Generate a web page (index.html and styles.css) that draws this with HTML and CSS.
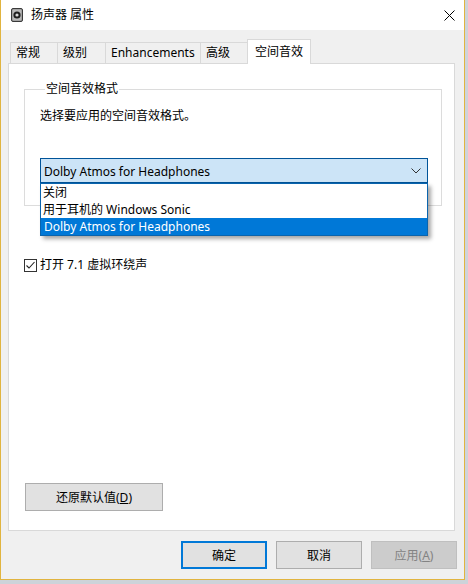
FILE: index.html
```html
<!DOCTYPE html>
<html lang="zh-CN">

<head>
    <meta charset="UTF-8">
    <title>扬声器 属性</title>
    <link rel="stylesheet" href="styles.css">
</head>

<body>

    <div class="window">

        <!-- Title bar -->
        <div class="titlebar">
            <svg class="app-icon" width="12" height="14" viewBox="0 0 12 14">
                <rect x="0.5" y="0.5" width="11" height="13" rx="1.5" fill="#8c8c8c" stroke="#3a3a3a"/>
                <rect x="1.5" y="1.5" width="9" height="11" rx="1" fill="#b9b9b9"/>
                <circle cx="6" cy="7" r="3.6" fill="#1e1e1e"/>
                <circle cx="6" cy="7" r="1.6" fill="#d8d8d8"/>
            </svg>
            <span class="title">扬声器 属性</span>
            <svg class="close" width="11" height="11" viewBox="0 0 11 11">
                <path d="M0.5 0.5 L10.5 10.5 M10.5 0.5 L0.5 10.5" stroke="#000" stroke-width="1"/>
            </svg>
        </div>

        <div class="client">

            <!-- Tabs -->
            <div class="tabs">
                <div class="tab tab-general">常规</div>
                <div class="tab tab-levels">级别</div>
                <div class="tab tab-enh">Enhancements</div>
                <div class="tab tab-adv">高级</div>
                <div class="tab tab-spatial active">空间音效</div>
            </div>

            <!-- Tab page -->
            <div class="panel">
                <fieldset class="group">
                    <legend>空间音效格式</legend>
                    <p class="desc">选择要应用的空间音效格式。</p>
                    <div class="combo-wrap">
                        <div class="combo">
                            <span>Dolby Atmos for Headphones</span>
                            <svg class="chevron" width="10" height="6" viewBox="0 0 10 6">
                                <path d="M0.5 0.5 L5 5 L9.5 0.5" fill="none" stroke="#333" stroke-width="1"/>
                            </svg>
                        </div>
                        <ul class="dropdown">
                            <li>关闭</li>
                            <li>用于耳机的 Windows Sonic</li>
                            <li class="selected">Dolby Atmos for Headphones</li>
                        </ul>
                    </div>
                </fieldset>

                <label class="check">
                    <span class="box">
                        <svg width="11" height="11" viewBox="0 0 11 11">
                            <path d="M1.5 5.5 L4 8 L9.5 2" fill="none" stroke="#222" stroke-width="1.1"/>
                        </svg>
                    </span>
                    打开 7.1 虚拟环绕声
                </label>

                <button class="btn reset">还原默认值(<u>D</u>)</button>
            </div>

            <!-- Dialog buttons -->
            <div class="actions">
                <button class="btn default">确定</button>
                <button class="btn">取消</button>
                <button class="btn disabled">应用(<u>A</u>)</button>
            </div>
        </div>
    </div>

</body>

</html>
```

FILE: styles.css
```css
/* Page */
body {
    margin: 0;
    background: #cdd3d9;
    font-family: "Noto Sans", "Noto Sans CJK SC", sans-serif;
    font-size: 12px;
    color: #000;
}

/* Window frame */
.window {
    width: 463px;
    height: 579px;
    border-left: 1px solid #e1b43f;
    border-right: 1px solid #e1b43f;
    border-bottom: 1px solid #e1b43f;
    background: #f0f0f0;
}

.titlebar {
    height: 30px;
    background: #fff;
    display: flex;
    align-items: center;
    padding-left: 10px;
    padding-right: 9px;
}

.app-icon {
    margin-right: 8px;
}

.title {
    flex-grow: 1;
    line-height: 16px;
}

/* Client area */
.client {
    display: flex;
    flex-direction: column;
}

/* Tabs */
.tabs {
    display: flex;
    align-items: flex-end;
    height: 24px;
    margin-top: 9px;
    padding-left: 9px;
}

.tab {
    box-sizing: border-box;
    height: 21px;
    border: 1px solid #d9d9d9;
    border-bottom: none;
    padding-left: 5px;
    line-height: 20px;
    background: #f0f0f0;
    margin-left: -1px;
    white-space: nowrap;
}

.tab-general {
    width: 48px;
    margin-left: 0;
}

.tab-levels {
    width: 49px;
}

.tab-enh {
    width: 96px;
}

.tab-adv {
    width: 48px;
}

.tab-spatial {
    width: 64px;
}

.tab.active {
    position: relative;
    height: 25px;
    margin-bottom: -1px;
    padding-top: 2px;
    padding-left: 7px;
    background: #fff;
}

/* Tab page */
.panel {
    box-sizing: border-box;
    display: flex;
    flex-direction: column;
    align-items: flex-start;
    width: 447px;
    height: 468px;
    margin-left: 7px;
    padding: 17px 0 19px 15px;
    background: #fff;
    border: 1px solid #d9d9d9;
}

/* Group box */
.group {
    width: 418px;
    box-sizing: border-box;
    margin: 0;
    padding: 0 0 22px 15px;
    border: 1px solid #dcdcdc;
}

.group legend {
    padding: 0 1px;
    margin-left: 5px;
    line-height: 16px;
}

.desc {
    margin: 11px 0 0;
    line-height: 16px;
}

/* Combo box */
.combo-wrap {
    position: relative;
    width: 388px;
    margin-top: 34px;
}

.combo {
    box-sizing: border-box;
    height: 25px;
    display: flex;
    align-items: center;
    justify-content: space-between;
    padding: 1px 6px 0 3px;
    background: #cce4f7;
    border: 1px solid #005499;
}

.dropdown {
    position: absolute;
    top: 100%;
    left: 0;
    right: 0;
    margin: 0;
    padding: 0;
    list-style: none;
    background: #fff;
    border: 1px solid #0a64ad;
    box-shadow: 3px 3px 4px rgba(0, 0, 0, 0.35);
    z-index: 2;
}

.dropdown li {
    box-sizing: border-box;
    height: 17px;
    padding-top: 1px;
    line-height: 16px;
    padding-left: 2px;
    white-space: nowrap;
}

.dropdown li.selected {
    background: #0078d7;
    color: #fff;
    padding-left: 3px;
}

/* Checkbox */
.check {
    display: flex;
    align-items: center;
    margin-top: 51px;
    line-height: 16px;
}

.check .box {
    box-sizing: border-box;
    width: 13px;
    height: 13px;
    border: 1px solid #333;
    margin-right: 3px;
    display: flex;
    align-items: center;
    justify-content: center;
    background: #fff;
}

/* Buttons */
.btn {
    box-sizing: border-box;
    width: 86px;
    height: 28px;
    padding: 0;
    font-family: inherit;
    font-size: 12px;
    color: #000;
    background: #e1e1e1;
    border: 1px solid #adadad;
}

.btn u {
    text-underline-offset: 1px;
}

.reset {
    width: 138px;
    margin-top: auto;
    margin-left: 1px;
}

.actions {
    display: flex;
    justify-content: flex-end;
    gap: 9px;
    margin-top: 10px;
    padding-right: 7px;
}

.btn.default {
    border: 2px solid #0078d7;
}

.btn.disabled {
    background: #cccccc;
    border-color: #bfbfbf;
    color: #838383;
}
```
